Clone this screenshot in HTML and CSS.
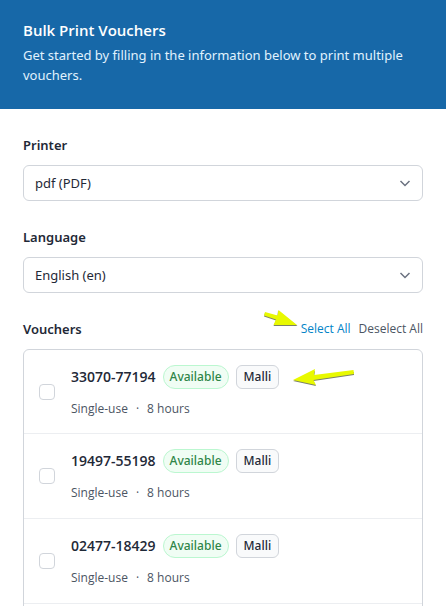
FILE: index.html
```html
<!DOCTYPE html>
<html lang="en">
<head>
<meta charset="utf-8">
<meta name="viewport" content="width=device-width, initial-scale=1">
<title>Bulk Print Vouchers</title>
<link rel="stylesheet" href="styles.css">
</head>
<body>
<div class="panel">
  <header class="panel-header">
    <h1 class="panel-title">Bulk Print Vouchers</h1>
    <p class="panel-text">Get started by filling in the information below to print multiple vouchers.</p>
  </header>
  <form class="form">
    <div class="field">
      <label class="label" for="printer">Printer</label>
      <div class="select-box">
        <select class="select" id="printer"><option>pdf (PDF)</option></select>
        <svg class="chevron" viewBox="0 0 12 12" aria-hidden="true"><path d="M1.5 4 6 8.5 10.5 4"/></svg>
      </div>
    </div>
    <div class="field">
      <label class="label" for="language">Language</label>
      <div class="select-box">
        <select class="select" id="language"><option>English (en)</option></select>
        <svg class="chevron" viewBox="0 0 12 12" aria-hidden="true"><path d="M1.5 4 6 8.5 10.5 4"/></svg>
      </div>
    </div>
    <section class="field">
      <div class="list-head">
        <h2 class="label">Vouchers</h2>
        <div class="actions">
          <svg class="arrow arrow-select" viewBox="0 0 36 18" aria-hidden="true">
            <path class="arrow-shadow" d="M2 3 1 6.500 13 10.500 10.500 16 34.500 16 15 1 14.500 6z"/>
            <path class="arrow-fill" d="M2 2 1 5.500 13 9.500 10.500 15 34 15 15.500 0 14.500 5.500z"/>
          </svg>
          <button class="action action-primary" type="button">Select All</button>
          <button class="action" type="button">Deselect All</button>
        </div>
      </div>
      <ul class="list">
        <li class="row">
          <input class="check" type="checkbox" id="v1">
          <div class="info">
            <div class="main">
              <label class="code" for="v1">33070-77194</label>
              <span class="tag tag-status">Available</span>
              <span class="tag">Malli</span>
              <svg class="arrow arrow-tag" viewBox="0 0 64 18" aria-hidden="true">
                <path class="arrow-shadow" d="M1 12 24 17 21.500 12 62 6 62 3 22 8 23 2z"/>
                <path class="arrow-fill" d="M1 11 24 16 21.500 11 62 5 61.500 1 22 6 23 0z"/>
              </svg>
            </div>
            <div class="meta"><span>Single-use</span><span>·</span><span>8 hours</span></div>
          </div>
        </li>
        <li class="row">
          <input class="check" type="checkbox" id="v2">
          <div class="info">
            <div class="main">
              <label class="code" for="v2">19497-55198</label>
              <span class="tag tag-status">Available</span>
              <span class="tag">Malli</span>
            </div>
            <div class="meta"><span>Single-use</span><span>·</span><span>8 hours</span></div>
          </div>
        </li>
        <li class="row">
          <input class="check" type="checkbox" id="v3">
          <div class="info">
            <div class="main">
              <label class="code" for="v3">02477-18429</label>
              <span class="tag tag-status">Available</span>
              <span class="tag">Malli</span>
            </div>
            <div class="meta"><span>Single-use</span><span>·</span><span>8 hours</span></div>
          </div>
        </li>
      </ul>
    </section>
  </form>
</div>
</body>
</html>
```
FILE: styles.css
```css
* {
  box-sizing: border-box;
}

body,
h1,
h2,
p,
ul {
  margin: 0;
  padding: 0;
}

body,
select,
button {
  font-family: "Segoe UI", "Noto Sans", "Open Sans", sans-serif;
  font-size: 13px;
  line-height: 20px;
}

body {
  background: #fff;
  color: #1f2937;
}

.panel {
  display: flex;
  flex-direction: column;
  height: 100vh;
  overflow: hidden;
}

.panel-header {
  flex: none;
  padding: 20px 23px 24px;
  background: #1768a8;
  color: #fff;
}

.panel-title {
  margin-bottom: 5px;
  font-family: "Segoe UI", "Open Sans", sans-serif;
  font-size: 15px;
  line-height: 20px;
  font-weight: 600;
}

.panel-text {
  color: #e0f2fe;
}

.form {
  display: flex;
  flex: 1;
  flex-direction: column;
  gap: 26px;
  min-height: 0;
  padding: 26px 23px 0;
}

.field {
  display: flex;
  flex: none;
  flex-direction: column;
  gap: 10px;
}

.label {
  font-size: 13px;
  line-height: 20px;
  font-weight: 600;
  color: #1f2937;
}

.select-box {
  display: grid;
  align-items: center;
}

.select,
.chevron {
  grid-area: 1 / 1;
}

.select {
  width: 100%;
  height: 36px;
  padding: 0 36px 0 11px;
  border: 1px solid #d1d5db;
  border-radius: 6px;
  background: #fff;
  color: #1f2937;
  appearance: none;
}

.chevron {
  justify-self: end;
  width: 12px;
  height: 12px;
  margin-right: 12px;
  fill: none;
  stroke: #6b7280;
  stroke-width: 1.5;
  pointer-events: none;
}

.list-head,
.actions,
.main,
.meta,
.row {
  display: flex;
  align-items: center;
}

.list-head {
  justify-content: space-between;
}

.actions {
  position: relative;
  gap: 8px;
}

.action,
.meta {
  font-family: "Segoe UI", "Open Sans", sans-serif;
  font-size: 12px;
  color: #4b5563;
}

.action {
  padding: 0;
  border: 0;
  background: none;
}

.action-primary {
  color: #0284c7;
}

.list {
  padding-bottom: 24px;
  border: 1px solid #d1d5db;
  border-radius: 6px;
  list-style: none;
}

.row {
  gap: 16px;
  height: 85px;
  padding: 0 15px;
  border-bottom: 1px solid #eceef1;
}

.row:first-child {
  height: 84px;
}

.check {
  width: 16px;
  height: 16px;
  margin: 0;
  border: 1px solid #d1d5db;
  border-radius: 4px;
  background: #fff;
  appearance: none;
}

.check:checked {
  background: #0284c7;
}

.info {
  display: flex;
  flex-direction: column;
  gap: 10px;
}

.main {
  position: relative;
  gap: 7px;
}

.code {
  font-family: "Segoe UI", "Open Sans", sans-serif;
  font-size: 14px;
  font-weight: 600;
  color: #1f2937;
}

.tag {
  padding: 1px 7px;
  border: 1px solid #d1d5db;
  border-radius: 6px;
  background: #f9fafb;
  font-size: 12px;
  line-height: 20px;
  font-weight: 500;
  color: #1f2937;
}

.tag-status {
  padding: 1px 6px;
  border-color: #bbf7d0;
  border-radius: 12px;
  background: #f0fdf4;
  color: #2f8548;
}

.meta {
  gap: 8px;
}

.arrow {
  position: absolute;
  pointer-events: none;
}

.arrow-select {
  right: 100%;
  bottom: 11px;
  width: 36px;
  height: 18px;
  margin-right: 2px;
}

.arrow-tag {
  left: 100%;
  top: 4px;
  width: 64px;
  height: 18px;
  margin-left: 13px;
}

.arrow-fill {
  fill: #e8f900;
}

.arrow-shadow {
  fill: #7b8068;
}
```
